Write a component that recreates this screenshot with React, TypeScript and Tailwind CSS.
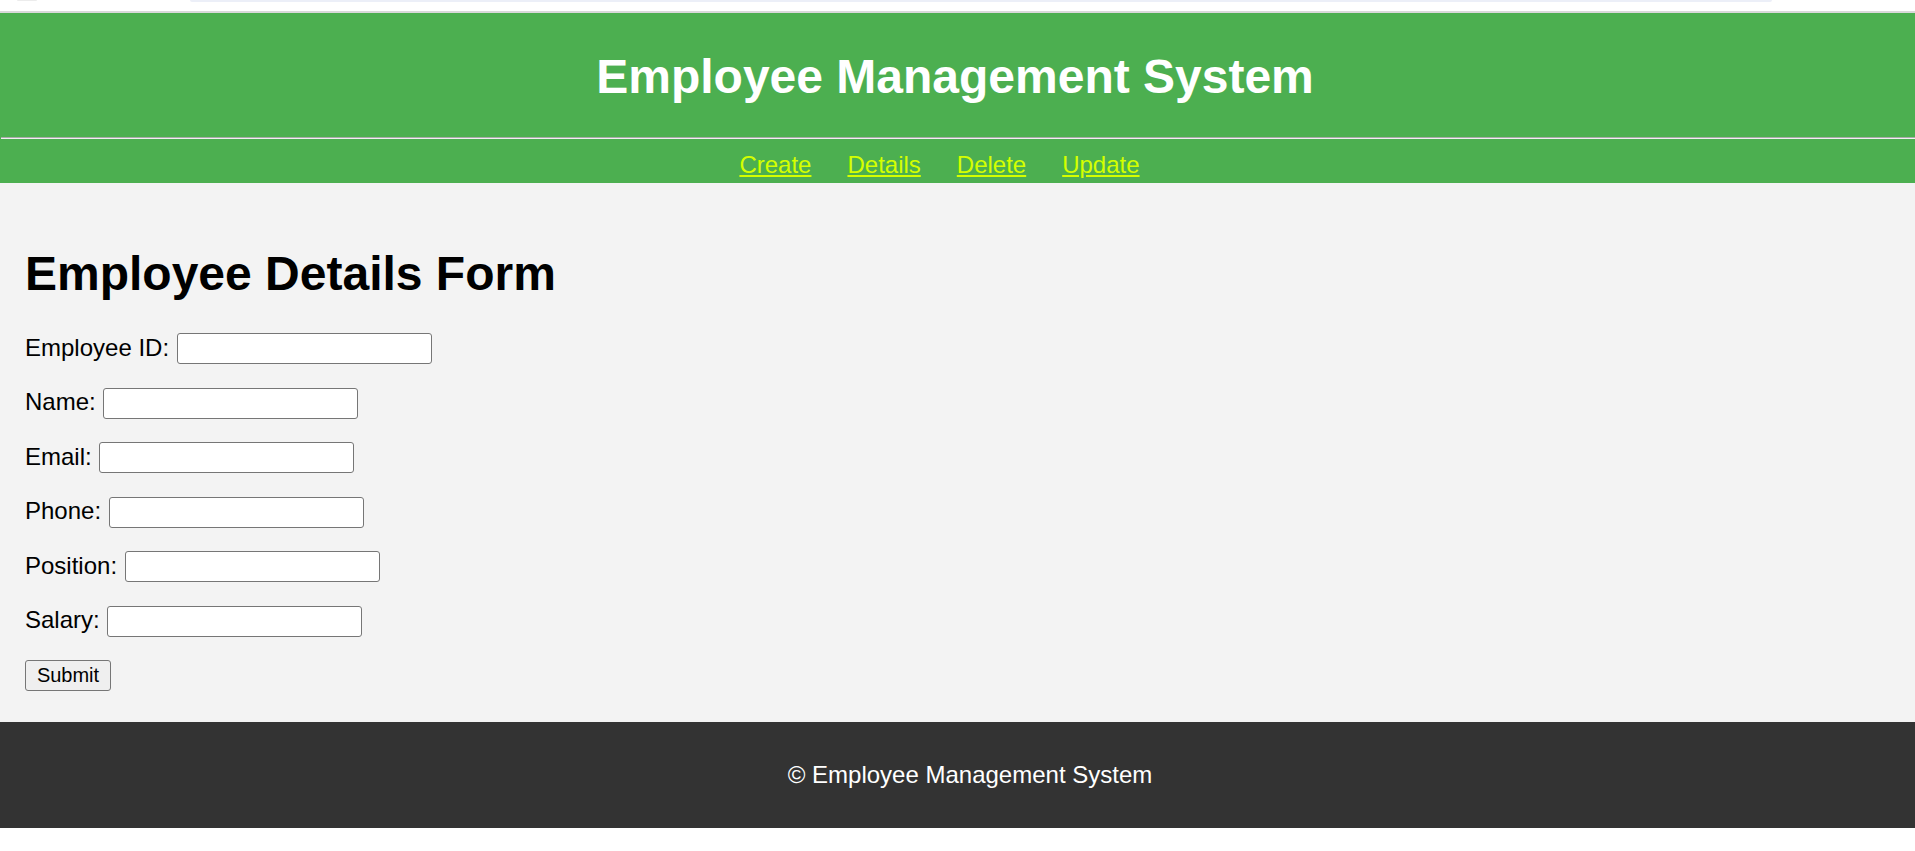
import React from 'react';

const fields = ['Employee ID', 'Name', 'Email', 'Phone', 'Position', 'Salary'];
const links = ['Create', 'Details', 'Delete', 'Update'];

export default function App() {
  return (
    <div className="min-h-screen bg-white font-['Liberation_Sans',Arial,sans-serif] text-black">
      {/* bottom edge of the browser chrome */}
      <div className="h-[11px] flex items-start">
        <div className="ml-[17px] w-[20px] h-[1px] rounded-b-full bg-[#ececec]" />
        <div className="ml-[153px] w-[1582px] h-[2px] rounded-b-full bg-[#eceff8]" />
      </div>
      <div className="h-[2px] bg-[#d9d9d9]" />

      <header className="bg-[#4caf50] text-white pb-[4px]">
        <h1 className="pt-[36px] pr-[5px] text-center text-[48px] font-bold leading-[55px]">
          Employee Management System
        </h1>
        <hr className="mt-[33px] ml-[1px] border-0 border-t border-t-[#a9a9a9] border-b border-b-[#f0f0f0]" />
        <nav className="flex justify-center gap-[36px] pt-[12px] pr-[36px] text-[24px] leading-[28px]">
          {links.map((l) => (
            <a key={l} href="#" className="text-[#d4ff00] underline">
              {l}
            </a>
          ))}
        </nav>
      </header>

      <main className="bg-[#f3f3f3] px-[25px] pt-[63px] pb-[31px]">
        <h2 className="text-[48px] font-bold leading-[55px]">Employee Details Form</h2>
        <form className="mt-[32px] flex flex-col items-start gap-[23.5px]" onSubmit={(e) => e.preventDefault()}>
          {fields.map((f) => (
            <div key={f} className="flex items-center gap-[7.5px] h-[31px] text-[24px] leading-[28px]">
              <label className="-mt-[2px]">{f}:</label>
              <input type="text" className="w-[255px] h-[31px] bg-white border border-[#767676] rounded-[3px] px-[3px] text-[20px]" />
            </div>
          ))}
          <button type="submit" className="w-[86px] h-[31px] bg-[#efefef] border border-[#767676] rounded-[3px] text-[20px] leading-[23px]">
            Submit
          </button>
        </form>
      </main>

      <footer className="h-[106px] bg-[#333333] flex items-center justify-center pl-[25px] text-white text-[24px] leading-[28px]">
        © Employee Management System
      </footer>
    </div>
  );
}
